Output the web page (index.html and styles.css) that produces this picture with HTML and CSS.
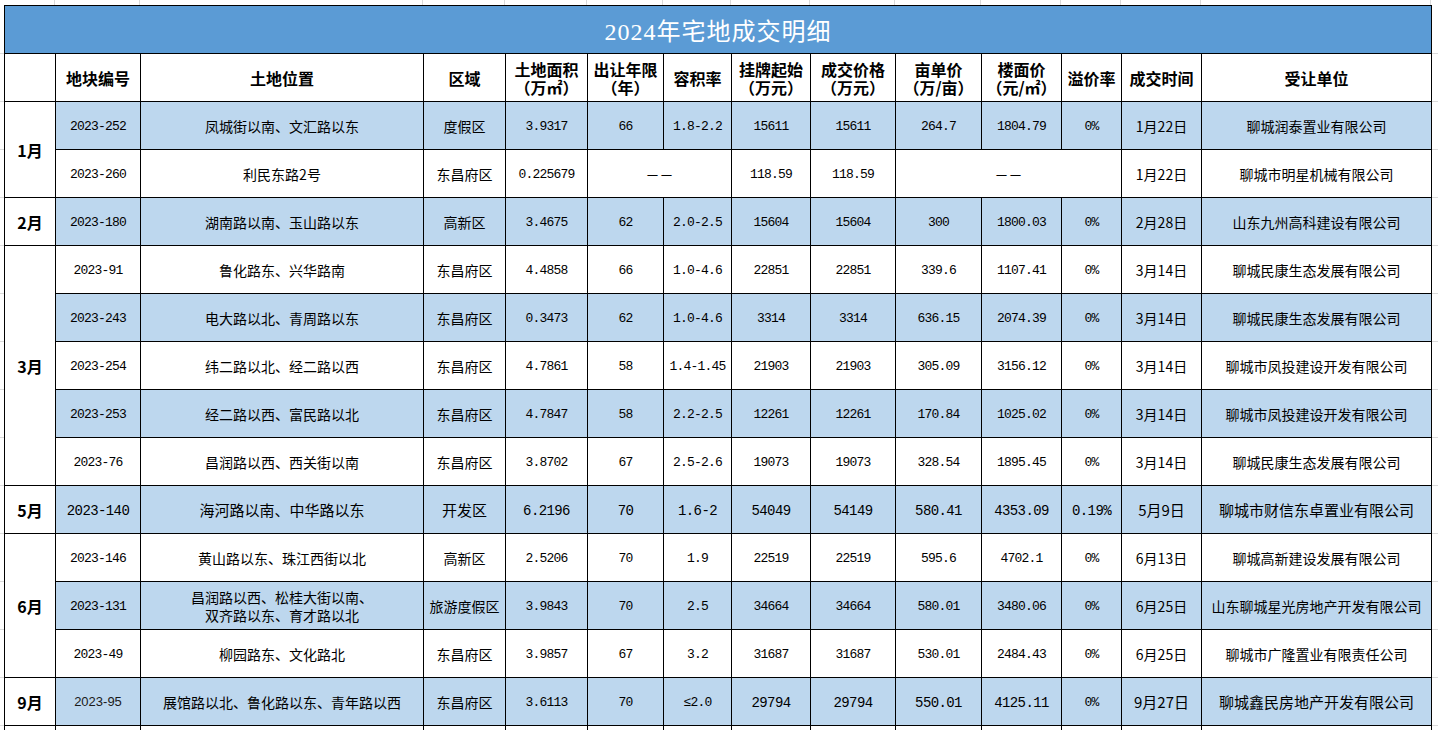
FILE: index.html
```html
<!DOCTYPE html>
<html lang="zh-CN">
<head>
<meta charset="utf-8">
<title>2024年宅地成交明细</title>
<link rel="stylesheet" href="styles.css">
</head>
<body>
<div class="sheet">
  <div class="top-strip"><span></span><span></span><span></span><span></span><span></span><span></span><span></span><span></span><span></span><span></span><span></span><span></span><span></span><span></span></div>
  <table class="grid">
    <colgroup>
      <col class="c-month"><col class="c-code"><col class="c-loc"><col class="c-area"><col class="c-size"><col class="c-years"><col class="c-far"><col class="c-start"><col class="c-deal"><col class="c-mu"><col class="c-floor"><col class="c-prem"><col class="c-date"><col class="c-buyer">
    </colgroup>
    <tr><td class="title" colspan="14">2024年宅地成交明细</td></tr>
    <tr class="head">
      <td></td>
      <td>地块编号</td>
      <td>土地位置</td>
      <td>区域</td>
      <td>土地面积<br>（万㎡）</td>
      <td>出让年限<br>（年）</td>
      <td>容积率</td>
      <td>挂牌起始<br>（万元）</td>
      <td>成交价格<br>（万元）</td>
      <td>亩单价<br>（万/亩）</td>
      <td>楼面价<br>（元/㎡）</td>
      <td>溢价率</td>
      <td>成交时间</td>
      <td>受让单位</td>
    </tr>
    <tr class="b">
      <td class="m" rowspan="2">1月</td>
      <td class="n">2023-252</td><td>凤城街以南、文汇路以东</td><td>度假区</td>
      <td class="n">3.9317</td><td class="n">66</td><td class="n">1.8-2.2</td><td class="n">15611</td><td class="n">15611</td>
      <td class="n">264.7</td><td class="n">1804.79</td><td class="n">0%</td><td>1月22日</td><td>聊城润泰置业有限公司</td>
    </tr>
    <tr>
      <td class="n">2023-260</td><td>利民东路2号</td><td>东昌府区</td>
      <td class="n">0.225679</td><td colspan="2">－－</td><td class="n">118.59</td><td class="n">118.59</td>
      <td colspan="3">－－</td><td>1月22日</td><td>聊城市明星机械有限公司</td>
    </tr>
    <tr class="b">
      <td class="m">2月</td>
      <td class="n">2023-180</td><td>湖南路以南、玉山路以东</td><td>高新区</td>
      <td class="n">3.4675</td><td class="n">62</td><td class="n">2.0-2.5</td><td class="n">15604</td><td class="n">15604</td>
      <td class="n">300</td><td class="n">1800.03</td><td class="n">0%</td><td>2月28日</td><td>山东九州高科建设有限公司</td>
    </tr>
    <tr>
      <td class="m" rowspan="5">3月</td>
      <td class="n">2023-91</td><td>鲁化路东、兴华路南</td><td>东昌府区</td>
      <td class="n">4.4858</td><td class="n">66</td><td class="n">1.0-4.6</td><td class="n">22851</td><td class="n">22851</td>
      <td class="n">339.6</td><td class="n">1107.41</td><td class="n">0%</td><td>3月14日</td><td>聊城民康生态发展有限公司</td>
    </tr>
    <tr class="b">
      <td class="n">2023-243</td><td>电大路以北、青周路以东</td><td>东昌府区</td>
      <td class="n">0.3473</td><td class="n">62</td><td class="n">1.0-4.6</td><td class="n">3314</td><td class="n">3314</td>
      <td class="n">636.15</td><td class="n">2074.39</td><td class="n">0%</td><td>3月14日</td><td>聊城民康生态发展有限公司</td>
    </tr>
    <tr>
      <td class="n">2023-254</td><td>纬二路以北、经二路以西</td><td>东昌府区</td>
      <td class="n">4.7861</td><td class="n">58</td><td class="n">1.4-1.45</td><td class="n">21903</td><td class="n">21903</td>
      <td class="n">305.09</td><td class="n">3156.12</td><td class="n">0%</td><td>3月14日</td><td>聊城市凤投建设开发有限公司</td>
    </tr>
    <tr class="b">
      <td class="n">2023-253</td><td>经二路以西、富民路以北</td><td>东昌府区</td>
      <td class="n">4.7847</td><td class="n">58</td><td class="n">2.2-2.5</td><td class="n">12261</td><td class="n">12261</td>
      <td class="n">170.84</td><td class="n">1025.02</td><td class="n">0%</td><td>3月14日</td><td>聊城市凤投建设开发有限公司</td>
    </tr>
    <tr>
      <td class="n">2023-76</td><td>昌润路以西、西关街以南</td><td>东昌府区</td>
      <td class="n">3.8702</td><td class="n">67</td><td class="n">2.5-2.6</td><td class="n">19073</td><td class="n">19073</td>
      <td class="n">328.54</td><td class="n">1895.45</td><td class="n">0%</td><td>3月14日</td><td>聊城民康生态发展有限公司</td>
    </tr>
    <tr class="b big">
      <td class="m">5月</td>
      <td class="n">2023-140</td><td>海河路以南、中华路以东</td><td>开发区</td>
      <td class="n">6.2196</td><td class="n">70</td><td class="n">1.6-2</td><td class="n">54049</td><td class="n">54149</td>
      <td class="n">580.41</td><td class="n">4353.09</td><td class="n">0.19%</td><td>5月9日</td><td>聊城市财信东卓置业有限公司</td>
    </tr>
    <tr>
      <td class="m" rowspan="3">6月</td>
      <td class="n">2023-146</td><td>黄山路以东、珠江西街以北</td><td>高新区</td>
      <td class="n">2.5206</td><td class="n">70</td><td class="n">1.9</td><td class="n">22519</td><td class="n">22519</td>
      <td class="n">595.6</td><td class="n">4702.1</td><td class="n">0%</td><td>6月13日</td><td>聊城高新建设发展有限公司</td>
    </tr>
    <tr class="b">
      <td class="n">2023-131</td><td>昌润路以西、松桂大街以南、<br>双齐路以东、育才路以北</td><td>旅游度假区</td>
      <td class="n">3.9843</td><td class="n">70</td><td class="n">2.5</td><td class="n">34664</td><td class="n">34664</td>
      <td class="n">580.01</td><td class="n">3480.06</td><td class="n">0%</td><td>6月25日</td><td>山东聊城星光房地产开发有限公司</td>
    </tr>
    <tr>
      <td class="n">2023-49</td><td>柳园路东、文化路北</td><td>东昌府区</td>
      <td class="n">3.9857</td><td class="n">67</td><td class="n">3.2</td><td class="n">31687</td><td class="n">31687</td>
      <td class="n">530.01</td><td class="n">2484.43</td><td class="n">0%</td><td>6月25日</td><td>聊城市广隆置业有限责任公司</td>
    </tr>
    <tr class="b">
      <td class="m">9月</td>
      <td class="sans">2023-95</td><td>展馆路以北、鲁化路以东、青年路以西</td><td>东昌府区</td>
      <td class="n">3.6113</td><td class="n">70</td><td class="n">≤2.0</td><td class="n nb">29794</td><td class="n nb">29794</td>
      <td class="n nb">550.01</td><td class="n nb">4125.11</td><td class="n">0%</td><td class="w">9月27日</td><td class="w">聊城鑫民房地产开发有限公司</td>
    </tr>
    <tr>
      <td class="m"></td><td></td><td></td><td></td><td></td><td></td><td></td><td></td><td></td><td></td><td></td><td></td><td></td><td></td>
    </tr>
  </table>
</div>
</body>
</html>
```
FILE: styles.css
```css
html, body {
  margin: 0;
  padding: 0;
  overflow: hidden;
}

body {
  background-color: #ffffff;
  background-image: repeating-linear-gradient(to bottom, transparent 0, transparent 47px, #dadada 47px, #dadada 48px);
  background-position: 0 6px;
  font-family: "Noto Sans CJK SC", sans-serif;
  color: #000;
}

.sheet {
  padding-left: 4px;
}

.top-strip {
  display: grid;
  grid-template-columns: 51px 85px 283px 82px 82px 76px 68px 79px 85px 86px 80px 60px 80px 230px;
  height: 5px;
}

.top-strip span {
  border-right: 1px solid #dadada;
}

.grid {
  border-collapse: collapse;
  table-layout: fixed;
}

.c-month { width: 51px; }
.c-code { width: 85px; }
.c-loc { width: 283px; }
.c-area { width: 82px; }
.c-size { width: 82px; }
.c-years { width: 76px; }
.c-far { width: 68px; }
.c-start { width: 79px; }
.c-deal { width: 85px; }
.c-mu { width: 86px; }
.c-floor { width: 80px; }
.c-prem { width: 60px; }
.c-date { width: 80px; }
.c-buyer { width: 230px; }

.grid td {
  border: 1px solid #000;
  height: 47px;
  padding: 0;
  text-align: center;
  vertical-align: middle;
  background: #ffffff;
  font-size: 14px;
  line-height: 18px;
  white-space: nowrap;
  overflow: hidden;
}

.grid td.title {
  background: #5b9bd5;
  color: #ffffff;
  font-family: "Liberation Serif", "Noto Sans CJK SC", serif;
  font-size: 24px;
  line-height: 28px;
  padding-top: 5px;
  height: 42px;
  letter-spacing: 1px;
}

.head td {
  font-weight: 700;
  font-size: 16px;
  line-height: 18px;
}

.grid tr.b td {
  background: #bdd7ee;
}

.grid td.m,
.grid tr.b td.m {
  background: #ffffff;
  font-weight: 700;
  font-size: 16px;
}

.grid td.n {
  font-family: "Liberation Mono", "Noto Sans CJK SC", monospace;
  font-size: 13px;
  letter-spacing: -0.8px;
  padding-top: 2px;
  height: 45px;
}

.grid tr.big td {
  font-size: 15px;
}

.grid tr.big td.n,
.grid td.nb {
  font-size: 14px;
  letter-spacing: -0.6px;
}

.grid tr.big td.m {
  font-size: 16px;
}

.grid td.w {
  font-size: 15px;
}

.grid td.sans {
  font-family: "Liberation Sans", sans-serif;
  font-size: 13px;
  color: #1a1a1a;
}
```
